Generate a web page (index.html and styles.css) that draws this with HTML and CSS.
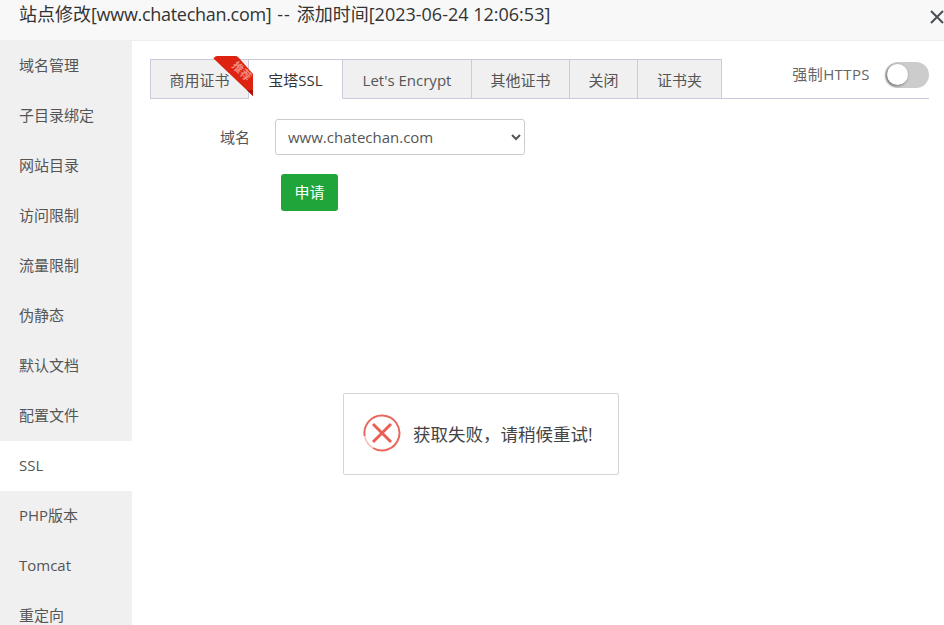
FILE: index.html
```html
<!DOCTYPE html>
<html lang="zh">
<head>
<meta charset="utf-8">
<title>站点修改</title>
<link rel="stylesheet" href="styles.css">
</head>
<body>
<div class="layer">
  <header class="title-bar">
    <span class="title">站点修改<span class="title-domain">[www.chatechan.com]</span><span class="title-sep"> -- </span>添加时间[2023-06-24 12:06:53]</span>
    <svg class="close" width="16" height="16" viewBox="0 0 16 16"><path d="M2 2 L14 14 M14 2 L2 14" stroke="#4a4f57" stroke-width="2" fill="none"/></svg>
  </header>
  <div class="layer-body">
    <nav class="side">
      <div class="side-item">域名管理</div>
      <div class="side-item">子目录绑定</div>
      <div class="side-item">网站目录</div>
      <div class="side-item">访问限制</div>
      <div class="side-item">流量限制</div>
      <div class="side-item">伪静态</div>
      <div class="side-item">默认文档</div>
      <div class="side-item">配置文件</div>
      <div class="side-item active">SSL</div>
      <div class="side-item">PHP版本</div>
      <div class="side-item">Tomcat</div>
      <div class="side-item">重定向</div>
    </nav>
    <main class="content">
      <div class="tabs-row">
        <div class="tabs">
          <div class="tab tab-a">商用证书
            <svg class="ribbon" width="44" height="44" viewBox="0 0 44 44">
              <path d="M0.5 2.5 Q1.5 0 4 0 L23 0 Q24.5 0 25.5 1.5 L40 18 L40 40 Z" fill="#dd2211"/>
              <path d="M40 34 L40 40 L34 34 Z" fill="#a81408"/>
              <text class="ribbon-text" x="0" y="0" transform="translate(26 18) rotate(45)" text-anchor="middle">推荐</text>
            </svg>
          </div>
          <div class="tab tab-b on">宝塔SSL</div>
          <div class="tab tab-c">Let's Encrypt</div>
          <div class="tab tab-d">其他证书</div>
          <div class="tab tab-e">关闭</div>
          <div class="tab tab-f">证书夹</div>
        </div>
        <div class="force">
          <span class="force-label">强制HTTPS</span>
          <span class="switch"><span class="knob"></span></span>
        </div>
      </div>
      <form class="form">
        <div class="form-row">
          <label class="form-label" for="domain">域名</label>
          <select id="domain" class="select"><option>www.chatechan.com</option></select>
        </div>
        <button type="button" class="btn">申请</button>
      </form>
    </main>
  </div>
  <div class="toast">
    <svg class="toast-icon" width="38" height="38" viewBox="0 0 38 38">
      <path d="M1.7 22 A17.5 17.5 0 1 1 10 34" fill="none" stroke="#e9685d" stroke-width="2"/>
      <path d="M10 34 A17.5 17.5 0 0 1 1.7 22" fill="none" stroke="#f6c4be" stroke-width="1.6"/>
      <path d="M10 10 L28 28 M28 10 L10 28" stroke="#ea5f54" stroke-width="3" fill="none"/>
    </svg>
    <span class="toast-text">获取失败，请稍候重试!</span>
  </div>
</div>
</body>
</html>
```
FILE: styles.css
```css
* { box-sizing: border-box; }
html, body { margin: 0; height: 100%; overflow: hidden; background: #fff; }
body {
  font-family: "Open Sans", "Noto Sans CJK SC", sans-serif;
  font-size: 15px;
  color: #555;
}
.layer { position: relative; height: 625px; display: flex; flex-direction: column; overflow: hidden; }
.title-bar {
  flex: none;
  height: 41px;
  background: #f8f8f8;
  border-bottom: 1px solid #eee;
  padding: 0 0 13px 19px;
  display: flex;
  align-items: center;
  justify-content: space-between;
}
.title { font-size: 18px; line-height: 28px; color: #333; white-space: nowrap; }
.title-domain { letter-spacing: -.3px; }
.title-sep { letter-spacing: 1.1px; }
.close { margin-right: -1px; margin-top: 6px; }
.layer-body { flex: 1; display: flex; min-height: 0; }
.side { flex: none; width: 132px; background: #f0f0f0; }
.side-item { height: 50px; line-height: 49px; padding-left: 19px; color: #555; white-space: nowrap; }
.side-item.active { background: #fff; }
.content { flex: 1; min-width: 0; padding: 18px 15px 0 18px; }
.tabs-row { display: flex; justify-content: space-between; height: 40px; border-bottom: 1px solid #ccc9dc; }
.tabs { display: flex; height: 40px; }
.tab {
  position: relative;
  height: 40px;
  line-height: 40px;
  text-align: center;
  background: #f0f0f0;
  border: 1px solid #ccc9dc;
  border-left: 0;
  color: #555;
  white-space: nowrap;
}
.tab-a { width: 99px; border-left: 1px solid #ccc9dc; }
.tab-b { width: 94px; }
.tab-c { width: 129px; }
.tab-d { width: 98px; }
.tab-e { width: 68px; }
.tab-f { width: 84px; }
.tab.on { background: #fff; border-bottom-color: #fff; border-left: 0; color: #333; }
.ribbon { position: absolute; left: 62px; top: -4px; z-index: 2; }
.ribbon-text { font-size: 11px; font-weight: 700; fill: #f28a7e; font-family: "Noto Sans CJK SC", sans-serif; }
.force { display: flex; align-items: flex-start; gap: 15px; padding-top: 3px; }
.force-label { line-height: 26px; color: #666; white-space: nowrap; letter-spacing: .4px; position: relative; top: -1px; }
.switch { position: relative; width: 44px; height: 26px; border-radius: 13px; background: #ccc; display: block; }
.knob { position: absolute; left: 2px; top: 2px; width: 21px; height: 21px; border-radius: 50%; background: #fff; box-shadow: -1px 1px 3px rgba(0,0,0,.5); }
.form { padding-top: 20px; }
.form-row { display: flex; align-items: center; }
.form-label { width: 100px; text-align: right; color: #555; line-height: 36px; }
.select {
  margin-left: 25px;
  width: 250px;
  height: 36px;
  padding: 0 8px;
  border: 1px solid #ccc;
  border-radius: 3px;
  background: #fff;
  color: #555;
  font-family: inherit;
  font-size: 15px;
}
.btn {
  display: block;
  margin: 19px 0 0 131px;
  width: 57px;
  height: 37px;
  padding: 0 0 2px;
  border: 0;
  border-radius: 3px;
  background: #20a53a;
  color: #fff;
  font-family: inherit;
  font-size: 15px;
}
.toast {
  position: absolute;
  left: 343px;
  top: 393px;
  width: 276px;
  height: 82px;
  display: flex;
  align-items: center;
  gap: 12px;
  padding-left: 19px;
  background: #fff;
  border: 1px solid #d5d5d5;
  border-radius: 2px;
}
.toast-icon { flex: none; margin-top: -2px; }
.toast-text { font-size: 17.5px; color: #444; white-space: nowrap; padding-bottom: 2px; }
```
